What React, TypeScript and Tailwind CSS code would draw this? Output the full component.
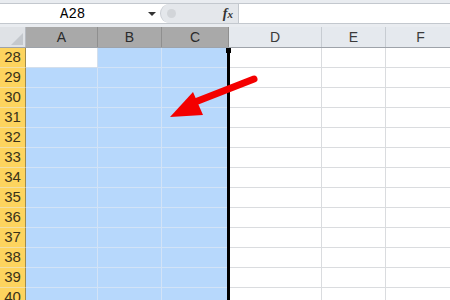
import React from "react";

const cols = [
  { l: "A", w: 72, sel: true },
  { l: "B", w: 64, sel: true },
  { l: "C", w: 67, sel: true },
  { l: "D", w: 93, sel: false },
  { l: "E", w: 64, sel: false },
  { l: "F", w: 70, sel: false },
];
const rows = [28, 29, 30, 31, 32, 33, 34, 35, 36, 37, 38, 39, 40];

export default function App() {
  return (
    <div className="relative w-[450px] h-[300px] overflow-hidden bg-white" style={{ fontFamily: '"Liberation Sans", Arial, sans-serif' }}>
      {/* formula bar */}
      <div className="h-[27px] bg-[#e9ecf0] pt-[3px] pb-[3px]">
        <div className="flex h-[21px] border-y border-[#c3c8ce] bg-white">
          <div className="relative w-[160px] flex items-center">
            <span className="ml-[60px] text-[14px] leading-none text-black" style={{ fontFamily: '"Liberation Mono", "DejaVu Sans Mono", monospace' }}>A28</span>
            <span className="absolute left-[148px] top-[8px] w-0 h-0 border-l-[4px] border-r-[4px] border-t-[4px] border-l-transparent border-r-transparent border-t-[#333]" />
          </div>
          <div className="relative w-[78px] flex items-center justify-end bg-[#e4e7eb] rounded-l-[10px] border-l border-[#c8ccd2] pr-[5px]">
            <span className="absolute left-[6px] top-[5px] w-[9px] h-[9px] rounded-full bg-[#d2d5d9]" />
            <span className="text-[14px] italic font-bold text-[#333] leading-none" style={{ fontFamily: '"Liberation Serif", "Times New Roman", serif' }}>
              f<span className="text-[11px]">x</span>
            </span>
          </div>
          <div className="flex-1 border-l border-[#c3c8ce] bg-white" />
        </div>
      </div>
      {/* column headers */}
      <div className="flex h-[21px] border-b border-[#9ea3aa]">
        <div className="relative w-[26px] shrink-0 bg-[#dfe2e6] border-r border-[#b7bbc1]">
          <svg className="absolute left-0 top-0" width="25" height="20">
            <polygon points="11,18 23,18 23,6" fill="#c4c8cd" />
          </svg>
        </div>
        {cols.map((c) => (
          <div
            key={c.l}
            className={
              c.sel
                ? "shrink-0 flex items-center justify-center bg-[#a9a9a9] border-r border-[#8f8f8f] text-[14px] text-[#2b2b2b]"
                : "shrink-0 flex items-center justify-center bg-[#e5e9ee] border-r border-[#c7ccd2] text-[14px] text-[#3a3a3a]"
            }
            style={{ width: c.w }}
          >
            {c.l}
          </div>
        ))}
      </div>
      {/* rows */}
      {rows.map((r) => (
        <div key={r} className="flex h-[20px]">
          <div className="w-[26px] shrink-0 flex items-center justify-center bg-[#fdd45e] border-r border-[#a08a4c] border-b border-b-[#f3dfa4] text-[15px] text-[#3a3218]">
            {r}
          </div>
          {cols.map((c, i) => {
            const active = r === 28 && i === 0;
            const cls = c.sel
              ? active
                ? "shrink-0 bg-white border-r border-b border-[#d4dfec]"
                : "shrink-0 bg-[#b7d8fc] border-r border-b border-[#d2e3f7]"
              : "shrink-0 bg-white border-r border-b border-[#dadcdf]";
            return <div key={c.l} className={cls} style={{ width: c.w }} />;
          })}
        </div>
      ))}
      {/* selection border */}
      <div className="absolute left-[227px] top-[49px] w-[3px] h-[260px] bg-black" />
      <div className="absolute left-[226px] top-[48px] w-[5px] h-[5px] bg-black" />
      {/* red arrow */}
      <svg className="absolute left-0 top-0 pointer-events-none" width="450" height="300">
        <line x1="254" y1="79" x2="190" y2="104" stroke="#f40000" strokeWidth="7" strokeLinecap="round" />
        <polygon points="170,117 193,92 203,115" fill="#f40000" />
      </svg>
    </div>
  );
}
